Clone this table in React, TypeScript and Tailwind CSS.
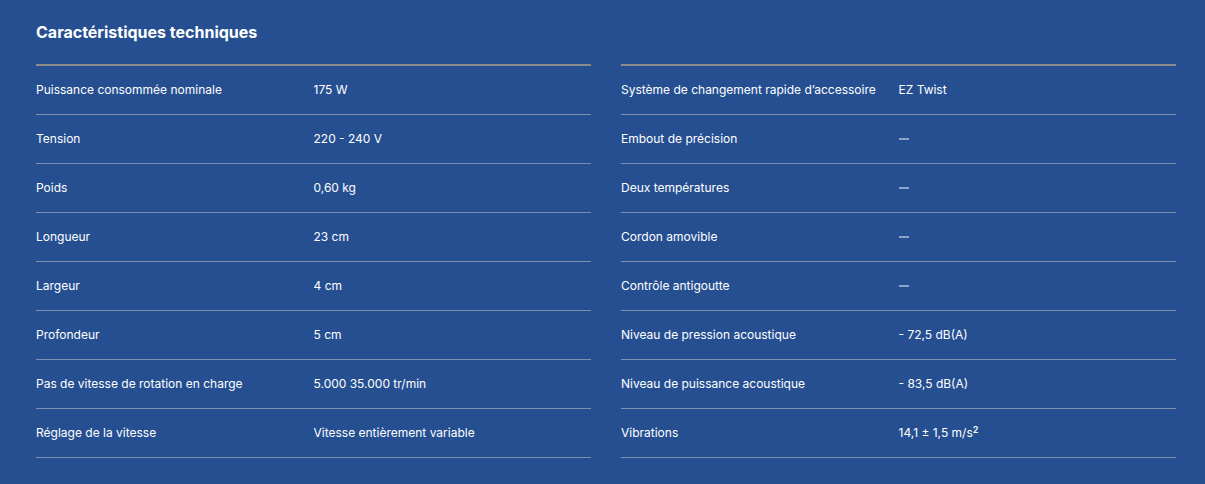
const left: [string, React.ReactNode][] = [
  ["Puissance consommée nominale", "175 W"],
  ["Tension", "220 - 240 V"],
  ["Poids", "0,60 kg"],
  ["Longueur", "23 cm"],
  ["Largeur", "4 cm"],
  ["Profondeur", "5 cm"],
  ["Pas de vitesse de rotation en charge", "5.000 35.000 tr/min"],
  ["Réglage de la vitesse", "Vitesse entièrement variable"],
];

const Dash = () => <span className="block w-[10px] h-[2px] bg-[#8fa3c8]" />;

const right: [string, React.ReactNode][] = [
  ["Système de changement rapide d’accessoire", "EZ Twist"],
  ["Embout de précision", <Dash />],
  ["Deux températures", <Dash />],
  ["Cordon amovible", <Dash />],
  ["Contrôle antigoutte", <Dash />],
  ["Niveau de pression acoustique", "- 72,5 dB(A)"],
  ["Niveau de puissance acoustique", "- 83,5 dB(A)"],
  [
    "Vibrations",
    <>
      14,1 ± 1,5 m/s<sup className="text-[9px] font-semibold">2</sup>
    </>,
  ],
];

const Table = ({ rows }: { rows: [string, React.ReactNode][] }) => (
  <div className="border-t-2 border-[#8c8c8c]">
    {rows.map(([label, value], i) => (
      <div key={i} className="grid grid-cols-2 h-[49px] items-center border-b border-[#7f8fae]">
        <span>{label}</span>
        <span>{value}</span>
      </div>
    ))}
  </div>
);

export default function App() {
  return (
    <div
      className="w-[1205px] h-[484px] bg-[#264f92] text-white px-[36px] pt-[22px] text-[12px]"
      style={{ fontFamily: "Inter, 'Liberation Sans', sans-serif" }}
    >
      <h2 className="text-[16px] font-bold leading-[20px] mb-[22px]">Caractéristiques techniques</h2>
      <div className="grid grid-cols-2 gap-[30px] w-[1140px]">
        <Table rows={left} />
        <Table rows={right} />
      </div>
    </div>
  );
}
